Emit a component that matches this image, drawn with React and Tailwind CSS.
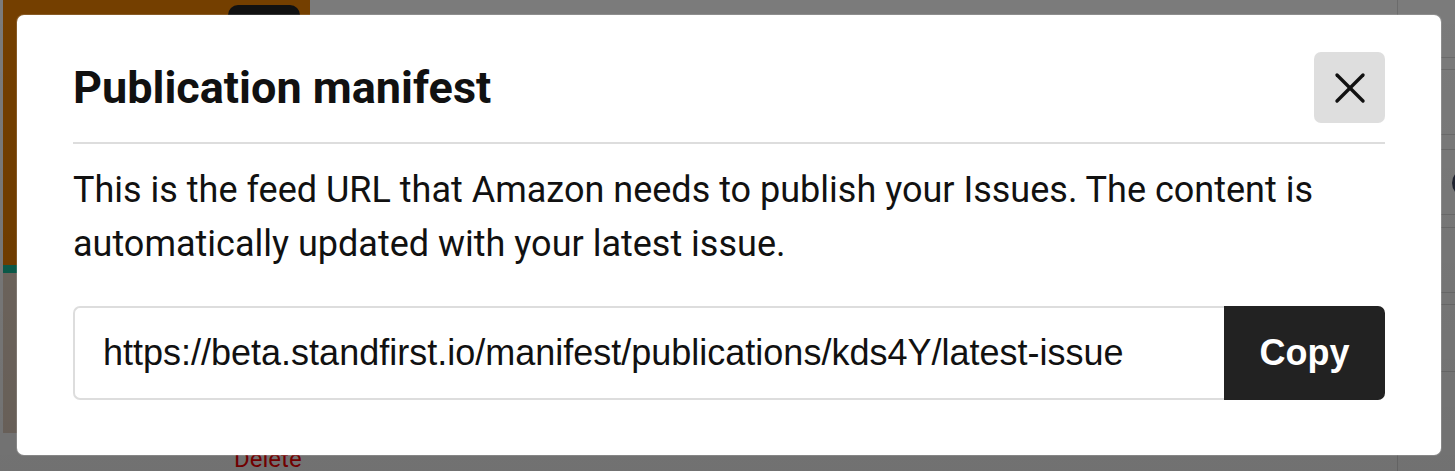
import React from "react";

function XIcon() {
  return (
    <svg width="32" height="32" viewBox="0 0 32 32" fill="none" stroke="#111" strokeWidth="3.4" strokeLinecap="round">
      <path d="M3 3 L29 29" />
      <path d="M29 3 L3 29" />
    </svg>
  );
}

export default function App() {
  return (
    <div className="relative w-[1455px] h-[471px] overflow-hidden bg-[#f6f6f6]" style={{ fontFamily: "Roboto, 'Noto Sans', sans-serif" }}>
      {/* background page */}
      <div className="flex h-full">
        <div className="w-[310px] pl-[3px] flex flex-col">
          <div className="relative h-[268px] bg-[#e87e00]">
            <div className="absolute left-[225px] top-[5px] w-[72px] h-[40px] rounded-[10px] bg-[#222]" />
          </div>
          <div className="h-[8px] bg-[#16b894]" />
          <div className="h-[162px] bg-[#dfcdbd]" />
          <div className="pl-[231px] pt-[14px] text-[24px] leading-none text-[#f40000]">Delete</div>
        </div>
        <div className="flex-1" />
        <div className="w-[58px] border-l border-[#d6d6d6] flex flex-col">
          <div className="h-[58px] border-b border-[#d6d6d6]" />
          <div className="h-[12px] border-b border-[#d6d6d6]" />
          <div className="h-[65px] border-b border-[#d6d6d6]" />
          <div className="h-[15px] border-b border-[#d6d6d6]" />
          <div className="h-[65px] border-b border-[#d6d6d6] relative">
            <div className="absolute left-[54px] top-[19px] w-[28px] h-[28px] rounded-full bg-[#3d4660]" />
          </div>
          <div className="h-[13px] border-b border-[#d6d6d6]" />
          <div className="h-[65px] border-b border-[#d6d6d6]" />
          <div className="h-[12px] border-b border-[#d6d6d6]" />
          <div className="h-[67px] border-b border-[#d6d6d6]" />
        </div>
      </div>

      {/* overlay */}
      <div className="absolute inset-0 bg-gradient-to-b from-black/50 to-black/54" />

      {/* modal */}
      <div className="absolute left-[17px] top-[15px] w-[1424px] h-[440px] bg-white rounded-[7px] shadow-[0_0_0_1px_rgba(255,255,255,0.15)] px-[56px] pt-[37px]">
        <div className="flex items-center justify-between">
          <h2 className="text-[45px] font-bold text-[#111] leading-none">Publication manifest</h2>
          <button className="w-[71px] h-[71px] rounded-[7px] bg-[#dedede] flex items-center justify-center">
            <XIcon />
          </button>
        </div>
        <div className="mt-[19px] h-[2px] bg-[#dddddd]" />
        <p className="mt-[19px] text-[36px] leading-[54px] text-[#111]">
          This is the feed URL that Amazon needs to publish your Issues. The content is automatically updated with your latest issue.
        </p>
        <div className="mt-[35px] flex h-[94px]" style={{ fontFamily: "'Liberation Sans', Arial, sans-serif" }}>
          <div className="flex-1 flex items-center border-2 border-r-0 border-[#dddddd] rounded-l-[7px] pl-[28px] text-[36px] text-[#111]">
            https://beta.standfirst.io/manifest/publications/kds4Y/latest-issue
          </div>
          <button className="w-[161px] bg-[#222222] rounded-r-[7px] text-white text-[36px] font-bold flex items-center justify-center">
            Copy
          </button>
        </div>
      </div>
    </div>
  );
}
